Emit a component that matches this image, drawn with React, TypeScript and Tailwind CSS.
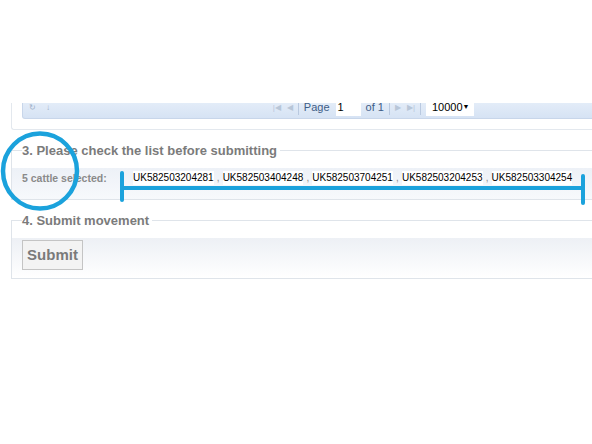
import React from "react";

const cattle = [
  "UK582503204281",
  "UK582503404248",
  "UK582503704251",
  "UK582503204253",
  "UK582503304254",
];

function Sep() {
  return <div className="mx-[5px] h-[14px] w-px bg-[#b9c9e0]" />;
}

function PagerToolbar() {
  return (
    <div className="flex h-[16px] items-end overflow-hidden rounded-b-[3px] border border-t-0 border-[#c8d6ea] bg-gradient-to-b from-[#e3ecf8] to-[#d6e3f4]">
      <div className="flex h-[21px] w-full items-center text-[11px] text-[#3d5c86]">
        <span className="ml-[6px] text-[8px] text-[#9fb1c9]">&#x21bb;</span>
        <span className="ml-[10px] text-[8px] text-[#9fb1c9]">&#x2193;</span>
        <div className="ml-auto flex items-center">
          <span className="text-[8px] text-[#b8c6d8]">|&#x25C0;</span>
          <span className="ml-[6px] text-[8px] text-[#b8c6d8]">&#x25C0;</span>
          <Sep />
          <span>Page</span>
          <div className="ml-[6px] flex h-[16px] w-[25px] items-center bg-white pl-[2px] text-black">1</div>
          <span className="ml-[5px]">of 1</span>
          <Sep />
          <span className="text-[8px] text-[#b8c6d8]">&#x25B6;</span>
          <span className="ml-[6px] text-[8px] text-[#b8c6d8]">&#x25B6;|</span>
          <Sep />
          <div className="flex h-[16px] w-[48px] items-center justify-between bg-white px-[6px] text-black">
            <span>10000</span>
            <span className="text-[7px]">&#x25BC;</span>
          </div>
        </div>
        <div className="w-[145px]" />
      </div>
    </div>
  );
}

export default function App() {
  return (
    <div className="relative h-[444px] w-[592px] overflow-hidden bg-white font-['Liberation_Sans',Arial,sans-serif]">
      <div className="w-[620px] pl-[11px] pt-[103px]">
        {/* grid panel bottom */}
        <div className="rounded-bl-[3px] border-b border-l border-[#e3e8ee] pb-[10px] pl-[10px]">
          <PagerToolbar />
        </div>

        {/* step 3 */}
        <fieldset className="mt-[13px] border border-[#dfe4ea] pl-0">
          <legend className="ml-[10px] pr-[3px] text-[13px] font-bold leading-[15px] text-[#7b7b7b]">
            3. Please check the list before submitting
          </legend>
          <div className="mt-[10px] flex h-[31px] items-start bg-gradient-to-b from-[#edf1f7] to-[#f7f9fc] pl-[10px] pt-[3px]">
            <span className="w-[111px] text-[10.5px] font-bold leading-[14px] text-[#8a8a8a]">5 cattle selected:</span>
            <div className="flex items-center text-[10px] leading-[14px] text-black">
              {cattle.map((id, i) => (
                <React.Fragment key={id}>
                  {i > 0 && <span className="w-[9px] text-center text-[#8a8a8a]">,</span>}
                  <span className="bg-white">{id}</span>
                </React.Fragment>
              ))}
            </div>
          </div>
        </fieldset>

        {/* step 4 */}
        <fieldset className="mt-[13px] border border-[#dfe4ea]">
          <legend className="ml-[10px] pr-[3px] text-[13px] font-bold leading-[15px] text-[#7b7b7b]">
            4. Submit movement
          </legend>
          <div className="mt-[10px] bg-gradient-to-b from-[#edf0f5] to-white pb-[8px] pl-[10px] pt-[2px]">
            <button className="h-[30px] w-[61px] border border-[#c4c4c4] bg-[#f3f3f3] text-[15px] font-bold text-[#7a7a7a]">
              Submit
            </button>
          </div>
        </fieldset>
      </div>

      {/* annotation overlay */}
      <svg className="pointer-events-none absolute left-0 top-0" width="592" height="444">
        <ellipse cx="40" cy="171" rx="37" ry="37.5" fill="none" stroke="#1ba2dc" strokeWidth="4.5" />
        <g stroke="#1ba2dc" strokeWidth="4" strokeLinecap="round" fill="none">
          <line x1="122" y1="173" x2="122" y2="200" />
          <line x1="122" y1="188" x2="583" y2="188" />
          <line x1="583" y1="176" x2="583" y2="203" />
        </g>
      </svg>
    </div>
  );
}
